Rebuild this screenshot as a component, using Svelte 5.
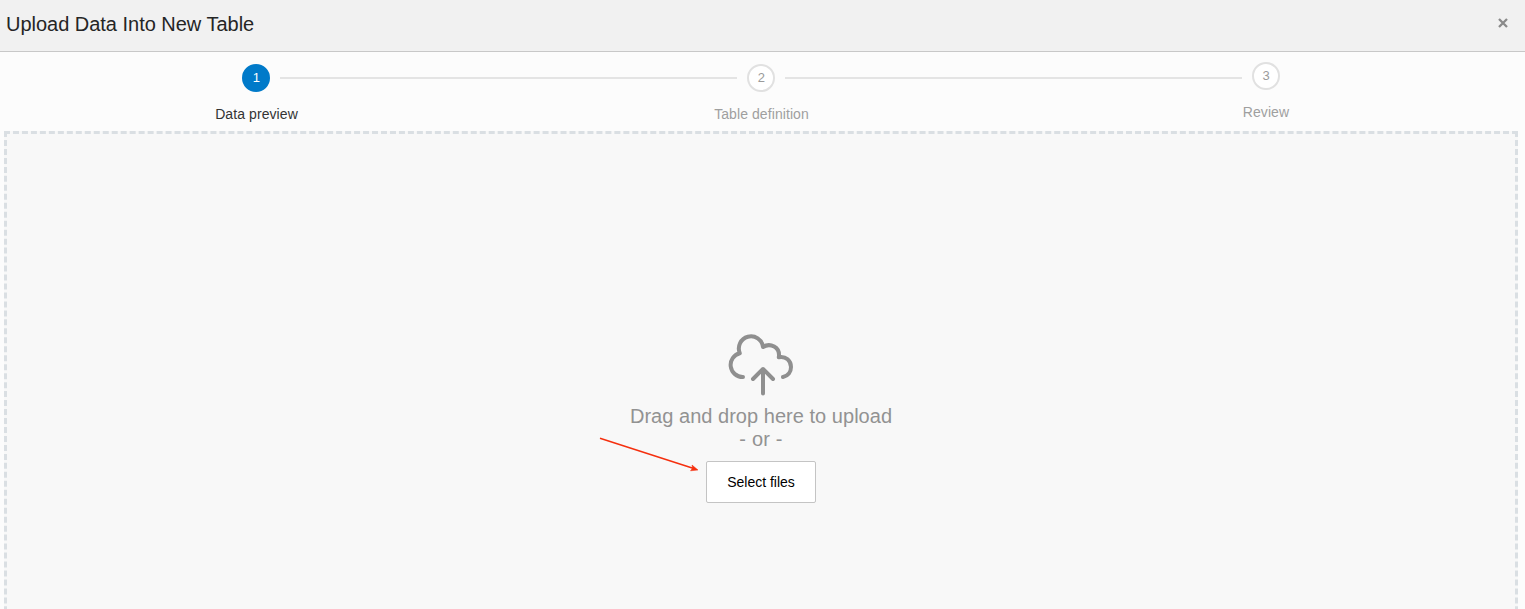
<script>
  const steps = ['Data preview', 'Table definition', 'Review'];
  const current = 0;
</script>

<div class="dialog">
  <header>
    <h1>Upload Data Into New Table</h1>
    <button class="close" aria-label="Close">
      <svg width="12" height="12" viewBox="0 0 12 12"><path d="M2 2L10 10M10 2L2 10" /></svg>
    </button>
  </header>

  <ol class="steps">
    {#each steps as label, i}
      <li class:active={i === current} class:last={i === steps.length - 1}>
        <div class="track">
          <span class="line" class:shown={i > 0}></span>
          <span class="num">{i + 1}</span>
          <span class="line" class:shown={i < steps.length - 1}></span>
        </div>
        <div class="label">{label}</div>
      </li>
    {/each}
  </ol>

  <main class="dropzone">
    <svg class="cloud" width="70" height="66" viewBox="726 332 70 66">
      <path d="M743 377A12.080 12.080 0 0 1 739.800 353.200A12.120 12.120 0 1 1 763 347C770 342.500 780.500 347 778.800 357.200C786 355.800 791 361 791 367C791 372 788 376 783 377" />
      <path d="M763 393.500V369M753 379L763 369L773 379" />
    </svg>
    <p>Drag and drop here to upload</p>
    <p>- or -</p>
    <div class="action">
      <button class="select">Select files</button>
      <svg class="pointer" width="102" height="38" viewBox="598 435 102 38">
        <path d="M600 438.300L693 468.300" />
        <polygon points="698,470 690.500,470.800 692.500,468.200 692,465" />
      </svg>
    </div>
  </main>
</div>

<style>
  :global(body) { margin: 0; overflow: hidden; }
  .dialog {
    box-sizing: border-box;
    height: 609px;
    overflow: hidden;
    display: flex;
    flex-direction: column;
    background: #fcfcfc;
    font-family: "Liberation Sans", Arial, sans-serif;
  }
  header {
    box-sizing: border-box;
    flex: none;
    height: 52px;
    padding: 0 16px 4px 6px;
    display: flex;
    align-items: center;
    justify-content: space-between;
    background: #f1f1f1;
    border-bottom: 1px solid #c8c8c8;
  }
  h1 { margin: 0; font-size: 20px; line-height: 24px; font-weight: 400; letter-spacing: -.02px; color: #252525; }
  .close { display: flex; padding: 0; margin-bottom: 1px; border: 0; background: none; }
  .close path { stroke: #8a8a8a; stroke-width: 2.3; fill: none; }
  .steps {
    list-style: none;
    margin: 0 6.500px 0 3.500px;
    padding: 12px 0 0;
    height: 67px;
    flex: none;
    display: flex;
  }
  li { flex: 1; text-align: center; }
  .last { margin-top: -2px; }
  .track { display: flex; align-items: center; gap: 10px; }
  .line { flex: 1; height: 2px; }
  .shown { background: #e4e4e4; }
  .last .line { position: relative; top: 2px; }
  .num {
    box-sizing: border-box;
    width: 28px;
    height: 28px;
    border: 2px solid #e1e1e1;
    border-radius: 50%;
    background: #fff;
    color: #9b9b9b;
    font-size: 13px;
    line-height: 24px;
    text-indent: .6px;
  }
  .last .num { text-indent: 0; }
  .label { margin-top: 14px; padding-left: 1px; font-size: 14px; line-height: 16px; letter-spacing: .08px; color: #9f9f9f; }
  .last .label { padding-left: 0; }
  .active .num { background: #007ac9; border-color: #007ac9; color: #fff; }
  .active .label { color: #333; }
  .dropzone {
    box-sizing: border-box;
    flex: none;
    height: 580px;
    margin: 0 7px 0 4px;
    border: 3px dashed #dadfe3;
    background: #f8f8f8;
    display: flex;
    flex-direction: column;
    align-items: center;
    padding-top: 198px;
  }
  .cloud path { fill: none; stroke: #8f8f8f; stroke-width: 4; stroke-linecap: round; stroke-linejoin: round; }
  p { margin: 0; font-size: 20px; line-height: 23px; letter-spacing: .03px; color: #929292; }
  .cloud + p { margin-top: 7px; }
  .cloud + p + p { letter-spacing: .2px; }
  .action { position: relative; margin-top: 10px; }
  .select {
    display: block;
    box-sizing: border-box;
    width: 110px;
    height: 42px;
    padding: 0;
    border: 1px solid #c4c4c4;
    border-radius: 2px;
    background: #fff;
    color: #000;
    font: 14px "Liberation Sans", Arial, sans-serif;
  }
  .pointer { position: absolute; left: -108px; top: -26px; }
  .pointer path { stroke: #f52f0e; stroke-width: 1.5; fill: none; }
  .pointer polygon { fill: #f52f0e; stroke: #f52f0e; stroke-width: .5; }
</style>
